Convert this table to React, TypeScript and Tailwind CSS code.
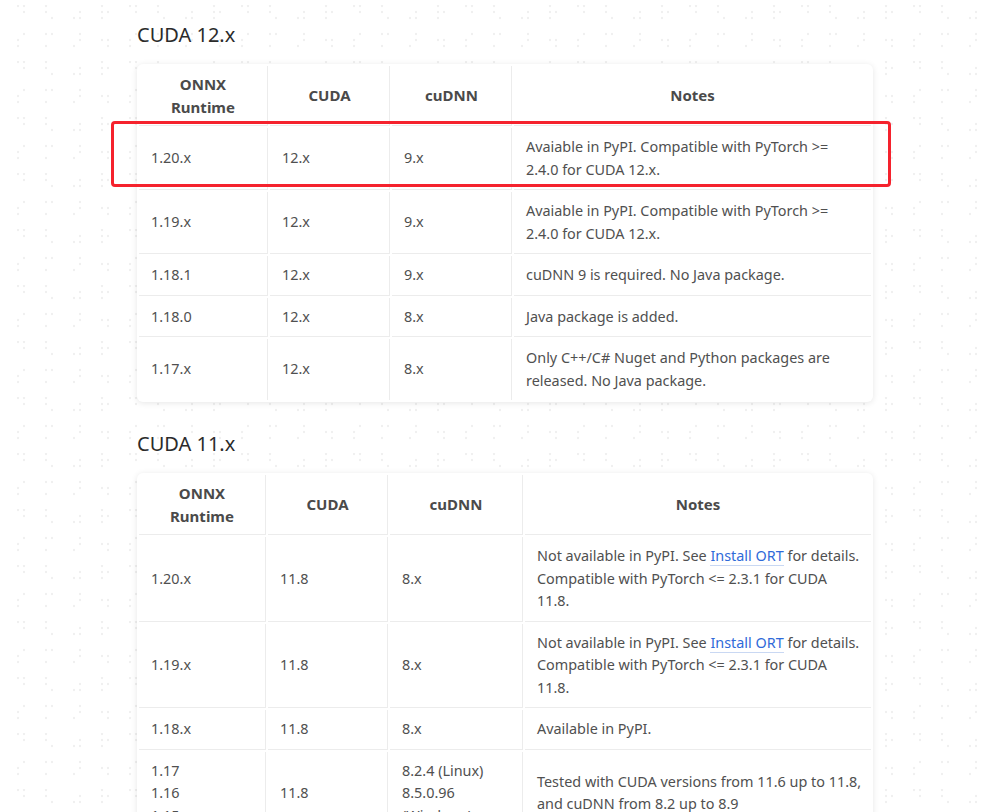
import React from 'react';

type Row = { ort: React.ReactNode; cuda: string; cudnn: React.ReactNode; notes: React.ReactNode };

const link = (label: string) => (
  <a className="text-[#2f6ad9] border-b border-[#c9d8f3]">{label}</a>
);

const cuda12: Row[] = [
  { ort: '1.20.x', cuda: '12.x', cudnn: '9.x', notes: <>Avaiable in PyPI. Compatible with PyTorch &gt;=<br />2.4.0 for CUDA 12.x.</> },
  { ort: '1.19.x', cuda: '12.x', cudnn: '9.x', notes: <>Avaiable in PyPI. Compatible with PyTorch &gt;=<br />2.4.0 for CUDA 12.x.</> },
  { ort: '1.18.1', cuda: '12.x', cudnn: '9.x', notes: 'cuDNN 9 is required. No Java package.' },
  { ort: '1.18.0', cuda: '12.x', cudnn: '8.x', notes: 'Java package is added.' },
  { ort: '1.17.x', cuda: '12.x', cudnn: '8.x', notes: <>Only C++/C# Nuget and Python packages are<br />released. No Java package.</> },
];

const cuda11: Row[] = [
  { ort: '1.20.x', cuda: '11.8', cudnn: '8.x', notes: <>Not available in PyPI. See {link('Install ORT')} for details.<br />Compatible with PyTorch &lt;= 2.3.1 for CUDA<br />11.8.</> },
  { ort: '1.19.x', cuda: '11.8', cudnn: '8.x', notes: <>Not available in PyPI. See {link('Install ORT')} for details.<br />Compatible with PyTorch &lt;= 2.3.1 for CUDA<br />11.8.</> },
  { ort: '1.18.x', cuda: '11.8', cudnn: '8.x', notes: 'Available in PyPI.' },
  { ort: <>1.17<br />1.16<br />1.15</>, cuda: '11.8', cudnn: <>8.2.4 (Linux)<br />8.5.0.96<br />(Windows)</>, notes: <>Tested with CUDA versions from 11.6 up to 11.8,<br />and cuDNN from 8.2 up to 8.9</> },
];

function Braille() {
  // faint braille watermark behind the page
  const cells = [
    [1, 1, 0, 1, 0, 0], [1, 0, 1, 0, 0, 1], [0, 0, 0, 1, 1, 1], [1, 0, 1, 1, 1, 0],
    [0, 1, 1, 0, 1, 0], [1, 1, 0, 0, 1, 0], [0, 1, 0, 1, 1, 0], [0, 0, 1, 1, 0, 1],
  ];
  return (
    <svg className="absolute inset-0 w-full h-full pointer-events-none" aria-hidden>
      <defs>
        <pattern id="br" width="112" height="56" patternUnits="userSpaceOnUse" x="17" y="5">
          {cells.map((c, i) => {
            const ox = (i % 4) * 28;
            const oy = Math.floor(i / 4) * 28;
            return c.map((on, j) =>
              on ? (
                <circle key={`${i}-${j}`} cx={ox + (j % 2) * 6 + 1} cy={oy + Math.floor(j / 2) * 6 + 1} r="1.2" fill="#f0f0f0" />
              ) : null
            );
          })}
        </pattern>
      </defs>
      <rect width="100%" height="100%" fill="url(#br)" />
    </svg>
  );
}

function VersionTable({ rows, widths, highlight }: { rows: Row[]; widths: string[]; highlight?: boolean }) {
  const cell = 'px-3 align-middle border-[#ececec]';
  return (
    <div className="relative bg-white rounded-md shadow-[0_1px_6px_rgba(0,0,0,0.1)]">
      <table className="table-fixed w-full border-separate border-spacing-[2px] text-[14.4px] leading-[22.5px] text-[#505050]">
        <thead>
          <tr>
            {['ONNX Runtime', 'CUDA', 'cuDNN', 'Notes'].map((h, i) => (
              <th key={h} className={`${widths[i]} ${cell} py-[7px] border-b ${i < 3 ? 'border-r' : ''} text-[15px] font-bold text-[#4a4a4a] text-center`}>
                {h === 'ONNX Runtime' ? <>ONNX<br />Runtime</> : h}
              </th>
            ))}
          </tr>
        </thead>
        <tbody>
          {rows.map((r, i) => {
            const b = i < rows.length - 1 ? 'border-b' : '';
            return (
              <tr key={i}>
                <td className={`${cell} py-[8px] ${b} border-r`}>{r.ort}</td>
                <td className={`${cell} py-[8px] ${b} border-r`}>{r.cuda}</td>
                <td className={`${cell} py-[8px] ${b} border-r whitespace-nowrap`}>{r.cudnn}</td>
                <td className={`${cell} py-[8px] ${b} whitespace-nowrap`}>{r.notes}</td>
              </tr>
            );
          })}
        </tbody>
      </table>
      {highlight && (
        <div className="absolute left-[-26px] top-[57px] w-[780px] h-[66px] border-[3px] border-[#f5222d] rounded-[4px]" />
      )}
    </div>
  );
}

export default function App() {
  return (
    <div className="relative min-h-[812px] bg-white overflow-hidden font-['Noto_Sans','Open_Sans',sans-serif]">
      <Braille />
      <div className="relative w-[736px] ml-[137px] pt-[21px] pb-10">
        <h2 className="text-[20px] leading-[28px] text-[#2b2b2b] mb-[15px]">CUDA 12.x</h2>
        <VersionTable rows={cuda12} widths={['w-[129px]', 'w-[120px]', 'w-[120px]', 'w-[357px]']} highlight />
        <h2 className="text-[20px] leading-[28px] text-[#2b2b2b] mt-[28px] mb-[15px]">CUDA 11.x</h2>
        <VersionTable rows={cuda11} widths={['w-[127px]', 'w-[120px]', 'w-[133px]', 'w-[346px]']} />
      </div>
    </div>
  );
}
